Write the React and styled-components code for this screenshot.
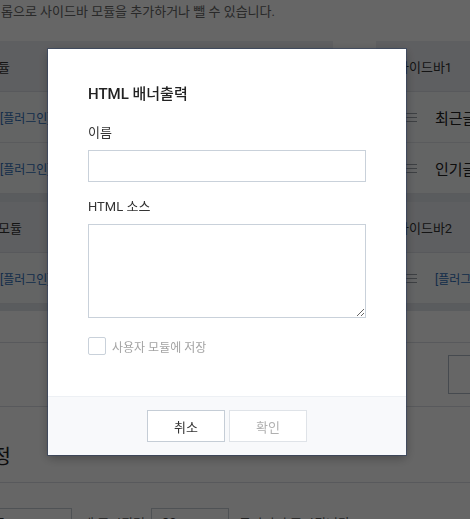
import React from "react";
import styled, { createGlobalStyle } from "styled-components";

const GlobalStyle = createGlobalStyle`
  html, body { margin: 0; padding: 0; background: #fff; overflow: hidden; }
  body { font-family: Roboto, "Noto Sans CJK KR", sans-serif; }
  * { box-sizing: border-box; }
`;

const Page = styled.div`
  width: 662px;
  margin-left: -62px;
`;

const Desc = styled.p`
  margin: 0;
  height: 41px;
  padding-left: 63px;
  font-size: 13px;
  line-height: 24px;
  color: #666;
`;

const Columns = styled.div`
  display: flex;
  gap: 43px;
  align-items: flex-start;
`;

const Column = styled.div`
  width: ${(p) => p.$w}px;
  background: #e2e5eb;
  display: flex;
  flex-direction: column;
  gap: 8px;
  padding-bottom: 7px;
`;

const Section = styled.div`
  background: #f8f9fb;
`;

const SectionHeader = styled.div`
  height: 51px;
  display: flex;
  align-items: center;
  padding-left: 21px;
  background: #eceef3;
  border-bottom: 1px solid #dcdfe5;
  font-size: 13px;
  color: #333;
  white-space: nowrap;
`;

const ModuleRow = styled.div`
  height: 51px;
  display: flex;
  align-items: center;
  gap: 18px;
  padding-left: ${(p) => p.$pad || 29}px;
  border-bottom: 1px solid #e1e4e9;
  font-size: ${(p) => (p.$plugin ? 12 : 15)}px;
  color: ${(p) => (p.$plugin ? "#2f6fb8" : "#222")};
  white-space: nowrap;
`;

const Handle = () => (
  <svg width="12" height="9" viewBox="0 0 12 9" style={{ flex: "none" }}>
    <path d="M0 0.5H12M0 4.5H12M0 8.5H12" stroke="#9aa0a8" strokeWidth="1" />
  </svg>
);

const SaveBar = styled.div`
  margin-top: 31px;
  border-top: 1px solid #dcdfe5;
  border-bottom: 1px solid #dcdfe5;
  padding: 12px 12px 12px 0;
  display: flex;
  justify-content: flex-end;
`;

const SaveButton = styled.button`
  width: 140px;
  height: 39px;
  background: #fff;
  border: 1px solid #aeb8c6;
  font-family: inherit;
  font-size: 13px;
  color: #333;
  padding: 0;
`;

const SectionTitle = styled.h2`
  margin: 0;
  padding: 36px 0 11px 36px;
  font-size: 20px;
  line-height: 28px;
  font-weight: 400;
  color: #222;
  border-bottom: 1px solid #dcdfe5;
`;

const FormRow = styled.div`
  display: flex;
  align-items: center;
  padding: 25px 0 0 48px;
  font-size: 13px;
  color: #555;
  white-space: nowrap;
`;

const SmallInput = styled.input`
  width: ${(p) => p.$w}px;
  height: 28px;
  border: 1px solid #c5ccd4;
  padding: 0 10px;
  font-family: inherit;
  font-size: 13px;
  color: #333;
  background: #fff;
`;

const Suffix = styled.span`
  margin: 0 ${(p) => p.$after || 0}px 0 10px;
`;

const Overlay = styled.div`
  position: fixed;
  inset: 0;
  background: rgba(0, 0, 0, 0.6);
  padding: 49px 0 0 48px;
`;

const Dialog = styled.div`
  width: 358px;
  height: 406px;
  background: #fff;
  display: flex;
  flex-direction: column;
  box-shadow: 0 0 0 1px rgba(35, 55, 95, 0.45), 0 3px 10px rgba(0, 0, 0, 0.3);
`;

const Body = styled.div`
  flex: 1;
  padding: 34px 40px 0;
  display: flex;
  flex-direction: column;
`;

const Title = styled.h3`
  margin: 0 0 19px;
  font-size: 15px;
  line-height: 22px;
  font-weight: 500;
  color: #222;
`;

const Field = styled.div`
  margin-bottom: ${(p) => p.$mb}px;
`;

const Label = styled.label`
  display: block;
  font-size: 13px;
  line-height: 18px;
  color: #333;
  margin-bottom: 8px;
`;

const TextInput = styled.input`
  display: block;
  width: 100%;
  height: 32px;
  border: 1px solid #c9d1da;
  border-radius: 0;
  padding: 0 10px;
  font-family: inherit;
  font-size: 13px;
  outline: none;
  background: #fff;
`;

const TextArea = styled.textarea`
  display: block;
  width: 100%;
  height: 94px;
  border: 1px solid #c9d1da;
  border-radius: 0;
  padding: 3px 10px;
  font-family: inherit;
  font-size: 13px;
  line-height: 20px;
  outline: none;
  caret-color: #222;
`;

const CheckRow = styled.label`
  display: flex;
  align-items: center;
  gap: 6px;
  height: 18px;
  font-size: 12px;
  color: #a3a3a3;
`;

const Box = styled.span`
  width: 18px;
  height: 18px;
  border: 1px solid #c9d1da;
  border-radius: 2px;
  background: #fff;
`;

const Footer = styled.div`
  height: 59px;
  border-top: 1px solid #edf0f4;
  background: #f8f9fb;
  display: flex;
  justify-content: center;
  align-items: center;
  gap: 4px;
`;

const Button = styled.button`
  width: 78px;
  height: 32px;
  padding: 0;
  background: #fff;
  border: 1px solid ${(p) => (p.$muted ? "#dfe3e8" : "#c5cdd6")};
  color: ${(p) => (p.$muted ? "#b0b0b0" : "#333")};
  font-family: inherit;
  font-size: 13px;
`;

export default function App() {
  return (
    <>
      <GlobalStyle />
      <Page>
        <Desc>롭으로 사이드바 모듈을 추가하거나 뺄 수 있습니다.</Desc>
        <Columns>
          <Column $w={395}>
            <Section>
              <SectionHeader>기본 모듈</SectionHeader>
              <ModuleRow $plugin $pad={32}>
                <Handle />
                [플러그인] 방문자 카운터
              </ModuleRow>
              <ModuleRow $plugin $pad={32}>
                <Handle />
                [플러그인] 최근 댓글
              </ModuleRow>
            </Section>
            <Section>
              <SectionHeader>사용자 모듈</SectionHeader>
              <ModuleRow $plugin $pad={32}>
                <Handle />
                [플러그인] 태그 클라우드
              </ModuleRow>
            </Section>
          </Column>
          <Column $w={224}>
            <Section>
              <SectionHeader>사이드바1</SectionHeader>
              <ModuleRow>
                <Handle />
                최근글
              </ModuleRow>
              <ModuleRow>
                <Handle />
                인기글
              </ModuleRow>
            </Section>
            <Section>
              <SectionHeader>사이드바2</SectionHeader>
              <ModuleRow $plugin>
                <Handle />
                [플러그인] 검색
              </ModuleRow>
            </Section>
          </Column>
        </Columns>
        <SaveBar>
          <SaveButton>변경사항 저장</SaveButton>
        </SaveBar>
        <SectionTitle>설정</SectionTitle>
        <FormRow>
          <SmallInput $w={86} defaultValue="5" />
          <Suffix $after={6}>개 표시되며</Suffix>
          <SmallInput $w={78} defaultValue="30" />
          <Suffix>글자까지 표시됩니다</Suffix>
        </FormRow>
      </Page>
      <Overlay>
        <Dialog>
          <Body>
            <Title>HTML 배너출력</Title>
            <Field $mb={16}>
              <Label>이름</Label>
              <TextInput />
            </Field>
            <Field $mb={19}>
              <Label>HTML 소스</Label>
              <TextArea autoFocus />
            </Field>
            <CheckRow>
              <Box />
              사용자 모듈에 저장
            </CheckRow>
          </Body>
          <Footer>
            <Button>취소</Button>
            <Button $muted>확인</Button>
          </Footer>
        </Dialog>
      </Overlay>
    </>
  );
}
